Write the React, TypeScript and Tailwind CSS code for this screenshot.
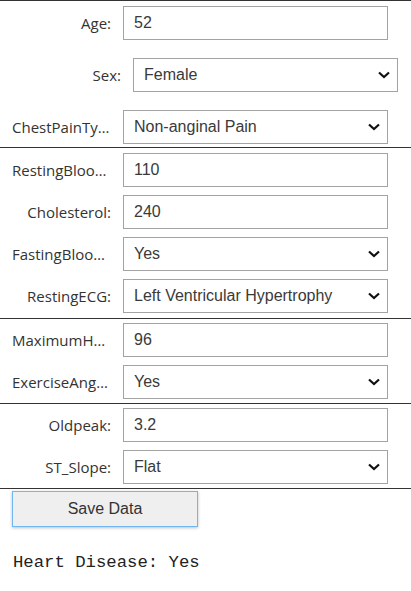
import React from 'react';

type Field = {
  label: string;
  value: string;
  kind: 'input' | 'select';
  options?: string[];
  shift?: boolean;
};

const SECTIONS: Array<{ rows: Field[]; gap: string; pad: string }> = [
  {
    gap: 'gap-[18px]',
    pad: 'pt-[5px] pb-[3px]',
    rows: [
      { label: 'Age:', value: '52', kind: 'input' },
      { label: 'Sex:', value: 'Female', kind: 'select', options: ['Male', 'Female'], shift: true },
      {
        label: 'ChestPainType:',
        value: 'Non-anginal Pain',
        kind: 'select',
        options: ['Typical Angina', 'Atypical Angina', 'Non-anginal Pain', 'Asymptomatic'],
      },
    ],
  },
  {
    gap: 'gap-[8px]',
    pad: 'pt-[5px] pb-[5px]',
    rows: [
      { label: 'RestingBloodPressure:', value: '110', kind: 'input' },
      { label: 'Cholesterol:', value: '240', kind: 'input' },
      { label: 'FastingBloodSugar:', value: 'Yes', kind: 'select', options: ['No', 'Yes'] },
      {
        label: 'RestingECG:',
        value: 'Left Ventricular Hypertrophy',
        kind: 'select',
        options: ['Normal', 'ST-T Wave Abnormality', 'Left Ventricular Hypertrophy'],
      },
    ],
  },
  {
    gap: 'gap-[8px]',
    pad: 'pt-[4px] pb-[4px]',
    rows: [
      { label: 'MaximumHeartRate:', value: '96', kind: 'input' },
      { label: 'ExerciseAngina:', value: 'Yes', kind: 'select', options: ['No', 'Yes'] },
    ],
  },
  {
    gap: 'gap-[8px]',
    pad: 'pt-[4px] pb-[4px]',
    rows: [
      { label: 'Oldpeak:', value: '3.2', kind: 'input' },
      { label: 'ST_Slope:', value: 'Flat', kind: 'select', options: ['Up', 'Flat', 'Down'] },
    ],
  },
];

function Chevron() {
  return (
    <svg
      className="pointer-events-none absolute right-[8px] top-1/2 -translate-y-1/2"
      width="12"
      height="8"
      viewBox="0 0 12 8"
    >
      <polyline points="1,1.5 6,6 11,1.5" fill="none" stroke="#111" strokeWidth="2.2" />
    </svg>
  );
}

function Row({ field }: { field: Field }) {
  const box =
    "h-[34px] w-[265px] border border-[#a3a3a3] bg-white pl-[10px] text-[16px] text-[#3a3a3a] outline-none font-['Liberation_Sans',Arial,sans-serif]";
  return (
    <div className={`flex items-center ${field.shift ? 'pl-[10px]' : ''}`}>
      <label className="w-[100px] truncate pr-px text-right text-[15px] text-[#333] font-['Open_Sans',sans-serif]">
        {field.label}
      </label>
      <div className="relative ml-[11px]">
        {field.kind === 'input' ? (
          <input className={box} defaultValue={field.value} readOnly />
        ) : (
          <>
            <select className={`${box} appearance-none`} defaultValue={field.value}>
              {field.options?.map((o) => (
                <option key={o}>{o}</option>
              ))}
            </select>
            <Chevron />
          </>
        )}
      </div>
    </div>
  );
}

export default function App() {
  return (
    <div className="min-h-[591px] bg-white">
      {SECTIONS.map((s, i) => (
        <div key={i} className={`flex flex-col border-t border-[#333] pl-[12px] ${s.gap} ${s.pad}`}>
          {s.rows.map((r) => (
            <Row key={r.label} field={r} />
          ))}
        </div>
      ))}
      <div className="border-t border-[#333] pl-[12px] pt-[2px]">
        <button className="h-[36px] w-[186px] border border-[#6fb6f2] bg-[#efefef] text-[16px] text-[#333] shadow-[0_1px_3px_rgba(0,0,0,0.25)] font-['Liberation_Sans',Arial,sans-serif]">
          Save Data
        </button>
        <pre className="mt-[23px] pl-px text-[17.3px] text-[#222] font-['Liberation_Mono',monospace]">
          Heart Disease: Yes
        </pre>
      </div>
    </div>
  );
}
